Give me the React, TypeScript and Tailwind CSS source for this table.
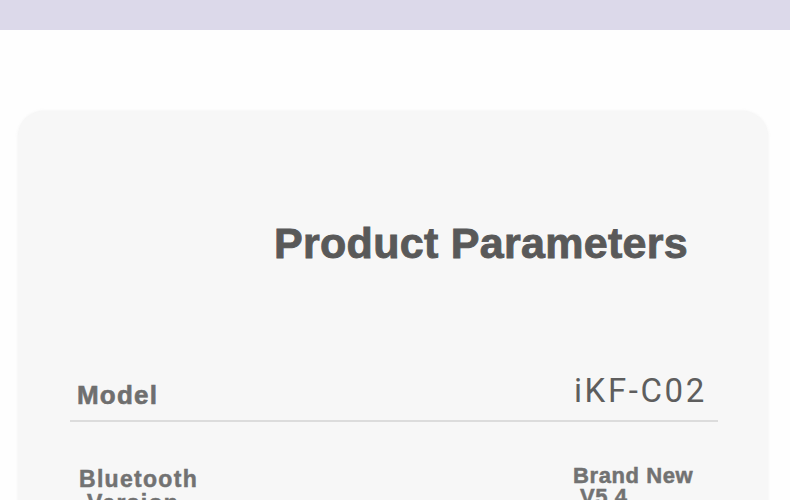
import React from "react";

export default function App() {
  return (
    <div className="w-[790px] h-[500px] overflow-hidden bg-[#fefefe] flex flex-col" style={{ fontFamily: '"Liberation Sans", Arial, sans-serif' }}>
      <div className="h-[30px] w-full bg-[#dcd9ea] shrink-0" />
      <div className="mx-[18px] mt-[81px] w-[750px] rounded-[26px] bg-[#f7f7f7] shadow-[0_0_3px_0_rgba(238,238,238,0.9)] pt-[111px] pb-[40px] flex flex-col">
        <div className="pl-[256px] text-[43px] leading-none font-bold text-[#595959] tracking-[0.3px] [-webkit-text-stroke:0.9px_#595959]">
          Product Parameters
        </div>
        <div className="mt-[109px] grid grid-cols-[497px_1fr] pl-[59px]">
          <div className="mt-[8px] text-[26px] leading-none font-bold text-[#6f6f6f] tracking-[1.2px] [-webkit-text-stroke:0.6px_#6f6f6f]">Model</div>
          <div className="text-[33px] leading-none font-normal text-[#5e5e5e] tracking-[2.6px]" style={{ fontFamily: 'Roboto, "Noto Sans", sans-serif' }}>
            iKF-C02
          </div>
        </div>
        <div className="mt-[12px] ml-[52px] w-[648px] h-[2px] bg-[#dcdcdc]" />
        <div className="mt-[45px] grid grid-cols-[494px_1fr] pl-[61px]">
          <div className="text-[23px] leading-[24px] font-bold text-[#727272] tracking-[1.3px] [-webkit-text-stroke:0.5px_#727272]">
            <div>Bluetooth</div>
            <div className="pl-[8px]">Version</div>
          </div>
          <div className="-mt-[2px] text-[22px] leading-[21px] font-bold text-[#727272] tracking-[0.6px] [-webkit-text-stroke:0.5px_#727272]">
            <div>Brand New</div>
            <div className="pl-[7px]">V5.4</div>
          </div>
        </div>
      </div>
    </div>
  );
}
